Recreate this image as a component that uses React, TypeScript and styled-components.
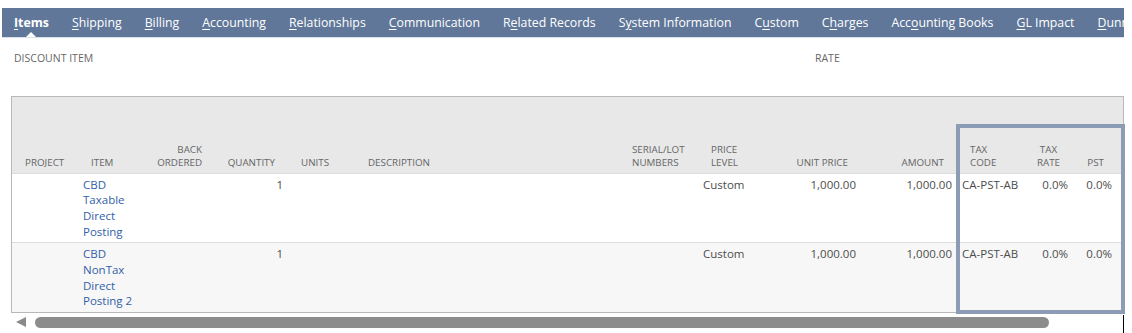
import React from 'react';
import styled, { createGlobalStyle } from 'styled-components';

const GlobalStyle = createGlobalStyle`
  body {
    margin: 0;
    background: #ffffff;
    font-family: 'Open Sans', 'Liberation Sans', sans-serif;
  }
`;

interface Column {
  key: string;
  label: React.ReactNode;
  width: number;
  align: 'left' | 'right';
  centerLabel?: boolean;
}

const columns: Column[] = [
  { key: 'project', label: 'Project', width: 66, align: 'left' },
  { key: 'item', label: 'Item', width: 62, align: 'left' },
  { key: 'back', label: <>Back<br />Ordered</>, width: 75, align: 'right' },
  { key: 'qty', label: 'Quantity', width: 73, align: 'right' },
  { key: 'units', label: 'Units', width: 67, align: 'left' },
  { key: 'desc', label: 'Description', width: 264, align: 'left' },
  { key: 'serial', label: <>Serial/Lot<br />Numbers</>, width: 79, align: 'left' },
  { key: 'level', label: <>Price<br />Level</>, width: 62, align: 'left' },
  { key: 'price', label: 'Unit Price', width: 101, align: 'right' },
  { key: 'amount', label: 'Amount', width: 96, align: 'right' },
  { key: 'taxcode', label: <>Tax<br />Code</>, width: 68, align: 'left' },
  { key: 'taxrate', label: <>Tax<br />Rate</>, width: 48, align: 'right', centerLabel: true },
  { key: 'pst', label: 'PST', width: 44, align: 'right' },
  { key: 'more', label: '', width: 60, align: 'left' },
];

const rows: Record<string, string>[] = [
  {
    item: 'CBD Taxable Direct Posting',
    qty: '1',
    level: 'Custom',
    price: '1,000.00',
    amount: '1,000.00',
    taxcode: 'CA-PST-AB',
    taxrate: '0.0%',
    pst: '0.0%',
  },
  {
    item: 'CBD NonTax Direct Posting 2',
    qty: '1',
    level: 'Custom',
    price: '1,000.00',
    amount: '1,000.00',
    taxcode: 'CA-PST-AB',
    taxrate: '0.0%',
    pst: '0.0%',
  },
];

// tab label split around its access-key letter
const tabs: [string, string, string][] = [
  ['', 'I', 'tems'],
  ['', 'S', 'hipping'],
  ['', 'B', 'illing'],
  ['', 'A', 'ccounting'],
  ['', 'R', 'elationships'],
  ['', 'C', 'ommunication'],
  ['R', 'e', 'lated Records'],
  ['S', 'y', 'stem Information'],
  ['C', 'u', 'stom'],
  ['C', 'h', 'arges'],
  ['Acc', 'o', 'unting Books'],
  ['', 'G', 'L Impact'],
  ['', 'D', 'unning'],
];

export default function App() {
  return (
    <>
      <GlobalStyle />
      <SPage>
        <STabBar>
          {tabs.map(([pre, key, post], i) => (
            <STab key={i} $active={i === 0}>
              {pre}
              <u>{key}</u>
              {post}
            </STab>
          ))}
        </STabBar>

        <SFieldRow>
          <SFieldLabel>Discount Item</SFieldLabel>
          <SFieldLabel>Rate</SFieldLabel>
        </SFieldRow>

        <STableArea>
          <STableFrame>
            <STable>
              <colgroup>
                {columns.map((c) => (
                  <col key={c.key} style={{ width: c.width }} />
                ))}
              </colgroup>
              <thead>
                <tr>
                  {columns.map((c) => (
                    <SHeadCell key={c.key} $align={c.align}>
                      {c.centerLabel ? <SCenterLabel>{c.label}</SCenterLabel> : c.label}
                    </SHeadCell>
                  ))}
                </tr>
              </thead>
              <tbody>
                {rows.map((r, i) => (
                  <SRow key={i} $shaded={i % 2 === 1}>
                    {columns.map((c) => (
                      <SCell key={c.key} $align={c.align}>
                        {c.key === 'item' ? <SLink>{r.item}</SLink> : r[c.key]}
                      </SCell>
                    ))}
                  </SRow>
                ))}
              </tbody>
            </STable>
          </STableFrame>

          <SScrollTrack>
            <SScrollArrow />
            <SScrollThumb />
            <SCursorMark />
          </SScrollTrack>

          <SHighlight />
        </STableArea>
      </SPage>
    </>
  );
}

const SPage = styled.div`
  padding: 8px 8px 0 2px;
`;

const STabBar = styled.div`
  display: flex;
  gap: 23px;
  height: 29px;
  padding-left: 12px;
  background: #607799;
  border-bottom: 1px solid #d8e0ea;
  overflow: hidden;
  white-space: nowrap;
`;

const STab = styled.div<{ $active?: boolean }>`
  position: relative;
  flex: none;
  padding-top: 1px;
  color: #ffffff;
  font-size: 12.3px;
  line-height: 28px;
  font-weight: ${({ $active }) => ($active ? 700 : 400)};

  u {
    text-decoration-thickness: 1px;
    text-underline-offset: 2px;
  }

  &::after {
    content: '';
    display: ${({ $active }) => ($active ? 'block' : 'none')};
    position: absolute;
    left: 50%;
    bottom: 0;
    margin-left: -5px;
    border-left: 5px solid transparent;
    border-right: 5px solid transparent;
    border-bottom: 5px solid #ffffff;
  }
`;

const SFieldRow = styled.div`
  display: grid;
  grid-template-columns: 801px auto;
  margin-top: 14px;
  padding-left: 12px;
`;

const SFieldLabel = styled.div`
  font-size: 10.5px;
  line-height: 12px;
  color: #666666;
  text-transform: uppercase;
`;

const STableArea = styled.div`
  position: relative;
  margin: 32px 0 0 9px;
  width: 1113px;
`;

const STableFrame = styled.div`
  border: 1px solid #b8b8b8;
  overflow: hidden;
`;

const STable = styled.table`
  table-layout: fixed;
  border-collapse: collapse;
  width: 1165px;
`;

const SHeadCell = styled.th<{ $align: 'left' | 'right' }>`
  height: 76px;
  box-sizing: border-box;
  padding: 0 ${({ $align }) => ($align === 'right' ? '13px' : '5px')} 3px
    ${({ $align }) => ($align === 'left' ? '13px' : '5px')};
  background: #e8e8e8;
  vertical-align: bottom;
  text-align: ${({ $align }) => $align};
  font-size: 9.8px;
  line-height: 12.7px;
  font-weight: 400;
  color: #666666;
  text-transform: uppercase;
  white-space: nowrap;
`;

const SCenterLabel = styled.span`
  display: inline-block;
  text-align: center;
`;

const SRow = styled.tr<{ $shaded?: boolean }>`
  height: 68px;
  background: ${({ $shaded }) => ($shaded ? '#f7f7f7' : '#ffffff')};
  border-top: 1px solid #dddddd;
`;

const SCell = styled.td<{ $align: 'left' | 'right' }>`
  padding: 3px 5px;
  vertical-align: top;
  text-align: ${({ $align }) => $align};
  font-size: 11.5px;
  line-height: 15.7px;
  color: #4d4d4d;
`;

const SLink = styled.span`
  color: #3160a8;
`;

const SScrollTrack = styled.div`
  display: flex;
  align-items: center;
  height: 20px;
  padding-left: 5px;
  gap: 9px;
`;

const SScrollArrow = styled.div`
  margin-top: -2px;
  width: 0;
  height: 0;
  border-top: 5.5px solid transparent;
  border-bottom: 5.5px solid transparent;
  border-right: 10px solid #8a8a8a;
`;

const SScrollThumb = styled.div`
  margin-top: -2px;
  width: 1014px;
  height: 11px;
  border-radius: 6px;
  background: #8c8c8c;
`;

const SCursorMark = styled.div`
  margin-left: auto;
  align-self: flex-end;
  width: 1px;
  height: 18px;
  background: #000000;
`;

const SHighlight = styled.div`
  position: absolute;
  left: 945px;
  top: 28px;
  width: 169px;
  height: 190px;
  box-sizing: border-box;
  border: 4px solid #8d9cb5;
  pointer-events: none;
`;
